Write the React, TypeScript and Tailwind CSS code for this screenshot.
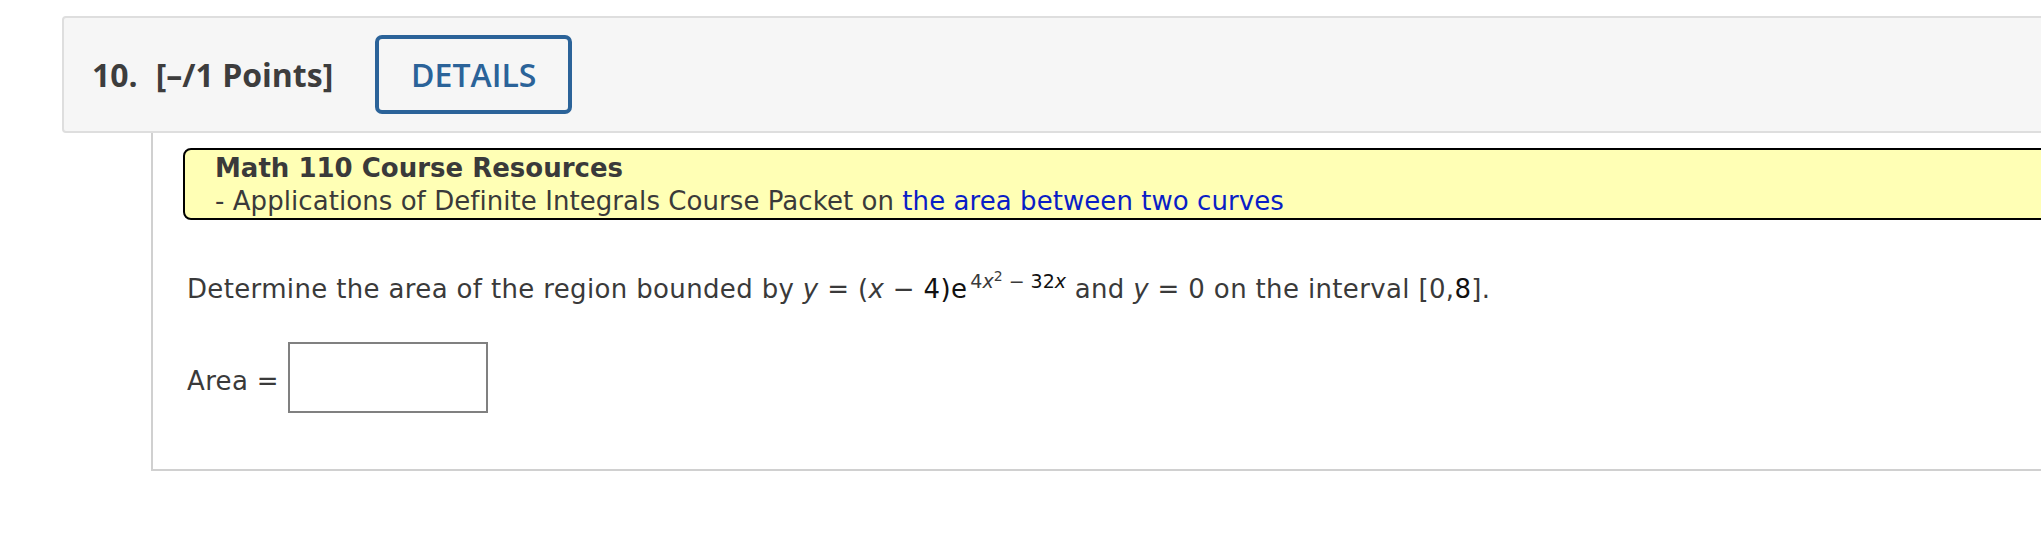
import React from 'react';

const verdana = { fontFamily: '"DejaVu Sans", Verdana, sans-serif' };

function Header() {
  return (
    <div className="flex h-[117px] items-center rounded-[4px] border-2 border-[#dedede] bg-[#f6f6f6] pl-[28px]">
      <span className="text-[32px] font-bold text-[#3d3d3d] [font-family:'Open_Sans',sans-serif]">10.</span>
      <span className="ml-[18px] text-[32px] font-bold text-[#3d3d3d] [font-family:'Open_Sans',sans-serif]">
        [–/1 Points]
      </span>
      <button className="ml-[42px] flex h-[79px] w-[197px] items-center justify-center rounded-[7px] border-4 border-[#2b6399] text-[32px] font-semibold text-[#2b6399] [font-family:'Open_Sans',sans-serif]">
        DETAILS
      </button>
    </div>
  );
}

function Resources() {
  return (
    <div
      className="rounded-[8px] border-2 border-black bg-[#ffffb5] pl-[30px] pt-[2px] text-[26px] leading-[33px] text-[#3a3a3a]"
      style={verdana}
    >
      <div className="font-bold">Math 110 Course Resources</div>
      <div className="tracking-[0.06px]">
        - Applications of Definite Integrals Course Packet on{' '}
        <a className="text-[#0a1ec6]">the area between two curves</a>
      </div>
    </div>
  );
}

function Question() {
  return (
    <div className="text-[26px] leading-[36px] tracking-[0.35px] text-[#3a3a3a]" style={verdana}>
      <p>
        Determine the area of the region bounded by <i>y</i> = (<i>x</i> − <span className="text-[#111]">4)e</span>
        <span className="relative -top-[10px] ml-[3px] text-[19px] leading-none tracking-normal">
          4<i>x</i>
          <span className="relative -top-[7px] text-[14px]">2</span> − <span className="text-[#111]">32</span>
          <i className="text-[#111]">x</i>
        </span>{' '}
        and <i>y</i> = 0 on the interval [0,<span className="text-[#111]">8</span>].
      </p>
      <div className="mt-[35px] flex items-center">
        <span className="mt-[6px]">Area&nbsp;=</span>
        <input type="text" className="ml-[9px] h-[71px] w-[200px] border-2 border-[#808080] bg-white outline-none" />
      </div>
    </div>
  );
}

export default function App() {
  return (
    <div className="h-[537px] w-full overflow-hidden bg-white">
      <div className="ml-[62px] w-[2200px] pt-[16px]">
        <Header />
        <div className="ml-[89px] h-[338px] border-b-2 border-l-2 border-[#d0d0d0] pl-[30px] pt-[15px]">
          <Resources />
          <div className="mt-[51px] pl-[4px]">
            <Question />
          </div>
        </div>
      </div>
    </div>
  );
}
